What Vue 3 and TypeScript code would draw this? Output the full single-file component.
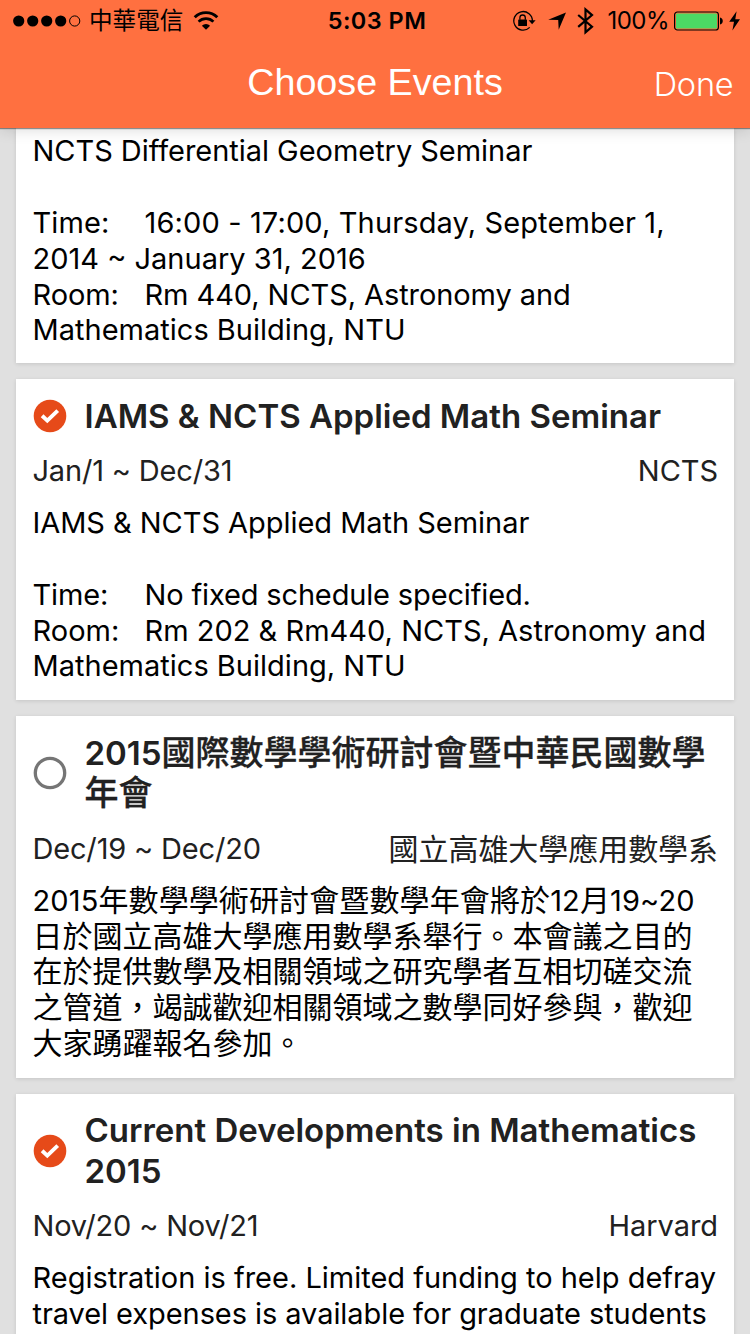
<script setup lang="ts">
interface BodyLine {
  text: string
  tracking: number
}

interface EventItem {
  id: number
  title: string[]
  selected: boolean
  dates: string
  host: string
  body: BodyLine[]
  partial?: boolean
}

const line = (text: string, tracking = 0): BodyLine => ({ text, tracking })

const events: EventItem[] = [
  {
    id: 1,
    title: [],
    selected: true,
    dates: '',
    host: '',
    partial: true,
    body: [
      line('NCTS Differential Geometry Seminar', -0.04),
      line(''),
      line('Time:\t16:00 - 17:00, Thursday, September 1,', 0.13),
      line('2014 ~ January 31, 2016'),
      line('Room:\tRm 440, NCTS, Astronomy and', -0.08),
      line('Mathematics Building, NTU', 0.01),
    ],
  },
  {
    id: 2,
    title: ['IAMS & NCTS Applied Math Seminar'],
    selected: true,
    dates: 'Jan/1 ~ Dec/31',
    host: 'NCTS',
    body: [
      line('IAMS & NCTS Applied Math Seminar', -0.04),
      line(''),
      line('Time:\tNo fixed schedule specified.', -0.15),
      line('Room:\tRm 202 & Rm440, NCTS, Astronomy and', 0.01),
      line('Mathematics Building, NTU', 0.01),
    ],
  },
  {
    id: 3,
    title: ['2015國際數學學術研討會暨中華民國數學', '年會'],
    selected: false,
    dates: 'Dec/19 ~ Dec/20',
    host: '國立高雄大學應用數學系',
    body: [
      line('2015年數學學術研討會暨數學年會將於12月19~20', 0.12),
      line('日於國立高雄大學應用數學系舉行。本會議之目的'),
      line('在於提供數學及相關領域之研究學者互相切磋交流'),
      line('之管道，竭誠歡迎相關領域之數學同好參與，歡迎'),
      line('大家踴躍報名參加。'),
    ],
  },
  {
    id: 4,
    title: ['Current Developments in Mathematics', '2015'],
    selected: true,
    dates: 'Nov/20 ~ Nov/21',
    host: 'Harvard',
    body: [
      line('Registration is free. Limited funding to help defray', -0.01),
      line('travel expenses is available for graduate students', -0.07),
    ],
  },
]

interface Run {
  text: string
  han: boolean
}

// Splits mixed text so Han characters can be set slightly larger than Latin ones.
function runs(text: string): Run[] {
  const parts = text.match(/[\u3000-\u9fff\uff00-\uffef]+|[^\u3000-\u9fff\uff00-\uffef]+/g) ?? []
  return parts.map((p) => ({ text: p, han: /[\u3000-\u9fff\uff00-\uffef]/.test(p) }))
}
</script>

<template>
  <div class="screen">
    <header class="header">
      <div class="status">
        <div class="status-left">
          <svg class="signal" width="68" height="12" viewBox="0 0 68 12">
            <circle v-for="n in 4" :key="n" :cx="5.7 + (n - 1) * 14" cy="6" r="5.6" />
            <circle cx="61.7" cy="6" r="5.1" fill="none" stroke="#000" stroke-width="1" />
          </svg>
          <span class="carrier">中華電信</span>
          <svg class="wifi" width="26" height="20" viewBox="0 0 26 20">
            <path d="M1.7 6.3A16 16 0 0 1 24.3 6.3" fill="none" stroke="#000" stroke-width="2.9" />
            <path d="M5.6 10.6A10.5 10.5 0 0 1 20.4 10.6" fill="none" stroke="#000" stroke-width="2.7" />
            <path d="M13 18.8L8.9 14.7A5.8 5.8 0 0 1 17.1 14.7Z" />
          </svg>
        </div>
        <span class="clock">5:03 PM</span>
        <div class="status-right">
          <svg class="lock" width="24" height="22" viewBox="0 0 24 22">
            <path d="M20.4 11.2A9.3 9.3 0 1 0 17.7 17.4" fill="none" stroke="#000" stroke-width="1.3" />
            <path d="M16.6 10.2H23.6L20.1 14.3Z" />
            <rect x="6.2" y="9.4" width="8.8" height="6.6" rx="0.6" />
            <path d="M7.9 9.8V7.7A2.7 2.7 0 0 1 13.3 7.7V9.8" fill="none" stroke="#000" stroke-width="1.3" />
          </svg>
          <svg class="location" width="18" height="18" viewBox="0 0 18 18">
            <path d="M18 0.4L10.7 17.8L10.2 8.1L0.2 7.8Z" />
          </svg>
          <svg class="bluetooth" width="17" height="28" viewBox="0 0 17 28">
            <path d="M1.2 8L15 19.7L8.5 25.4V2.4L15 8.1L1.2 19.8" fill="none" stroke="#000" stroke-width="2.2" />
          </svg>
          <span class="percent">100%</span>
          <svg class="battery" width="49" height="20" viewBox="0 0 49 20">
            <rect x="0.6" y="1" width="43.8" height="18" rx="2.8" fill="none" stroke="#000" stroke-width="1.2" />
            <rect x="2" y="2.4" width="41" height="15.2" rx="1.2" fill="#4cd964" />
            <path d="M46 6.5A3.6 3.6 0 0 1 46 13.5Z" />
          </svg>
          <svg class="bolt" width="12" height="20" viewBox="0 0 12 20">
            <path d="M7.6 0.2L0.2 10.8H5L3.4 19.6L11 8.2H6.3Z" />
          </svg>
        </div>
      </div>
      <div class="nav">
        <h1 class="nav-title">Choose Events</h1>
        <span class="done">Done</span>
      </div>
    </header>

    <main class="list">
      <article v-for="e in events" :key="e.id" class="card" :class="{ partial: e.partial }">
        <template v-if="!e.partial">
          <div class="heading">
            <svg class="check" width="34" height="34" viewBox="0 0 34 34">
              <template v-if="e.selected">
                <circle cx="17" cy="17" r="16.3" fill="#e64a19" />
                <path d="M9.1 16.8L14.3 21.6L24.7 11.7" fill="none" stroke="#fff" stroke-width="3.9" />
              </template>
              <circle v-else cx="17" cy="17" r="14.7" fill="none" stroke="#757575" stroke-width="3.3" />
            </svg>
            <h2 class="title">
              <span v-for="(t, i) in e.title" :key="i" class="line">
                <span v-for="(r, j) in runs(t)" :key="j" :class="{ han: r.han }">{{ r.text }}</span>
              </span>
            </h2>
          </div>
          <div class="meta">
            <span class="dates">{{ e.dates }}</span>
            <span class="host"><span v-for="(r, j) in runs(e.host)" :key="j" :class="{ han: r.han }">{{ r.text }}</span></span>
          </div>
        </template>
        <div class="body">
          <span
            v-for="(l, i) in e.body"
            :key="i"
            class="line"
            :style="{ letterSpacing: l.tracking + 'px' }"
          ><span v-for="(r, j) in runs(l.text)" :key="j" :class="{ han: r.han }">{{ r.text }}</span></span>
        </div>
      </article>
    </main>
  </div>
</template>

<style>
body {
  margin: 0;
}
</style>

<style scoped>
.screen {
  width: 750px;
  height: 1334px;
  overflow: hidden;
  display: flex;
  flex-direction: column;
  background: #e0e0e0;
  font-family: Inter, "Noto Sans CJK TC", sans-serif;
}
.header {
  flex: none;
  height: 128px;
  background: #ff7040;
  box-shadow: 0 1px 1px rgba(0, 0, 0, 0.4), 0 2px 14px rgba(0, 0, 0, 0.14);
  z-index: 1;
}
.status {
  height: 41px;
  display: grid;
  grid-template-columns: 1fr auto 1fr;
  align-items: center;
  padding: 0 9px 0 13px;
  font-size: 24px;
  color: #000;
}
.status-left,
.status-right {
  display: flex;
  align-items: center;
}
.status-right {
  justify-content: flex-end;
}
.carrier {
  margin-left: 8px;
  padding-top: 1px;
  font-size: 23.6px;
  line-height: 40px;
}
.wifi {
  margin-left: 10px;
}
.clock {
  font-weight: 600;
  font-size: 23.5px;
  letter-spacing: 0.45px;
}
.location {
  margin-left: 12px;
}
.bluetooth {
  margin-left: 11px;
}
.percent {
  margin-left: 13px;
  font-size: 24px;
  letter-spacing: -0.5px;
}
.battery {
  margin-left: 5px;
}
.bolt {
  margin-left: 6px;
}
.nav {
  height: 87px;
  display: grid;
  grid-template-columns: 1fr auto 1fr;
  align-items: center;
  padding: 0 16.5px;
  color: #fff;
}
.nav-title {
  grid-column: 2;
  margin: 0;
  padding-bottom: 4px;
  font-family: "Liberation Sans", Arial, sans-serif;
  font-size: 37.7px;
  font-weight: 400;
  line-height: 83px;
}
.done {
  justify-self: end;
  font-size: 32.5px;
  font-weight: 350;
  letter-spacing: -0.2px;
}
.list {
  display: flex;
  flex-direction: column;
  gap: 16px;
  padding: 0 16px;
}
.card {
  flex: none;
  padding: 16.7px 16px 15.8px 16.5px;
  background: #fff;
  box-shadow: 0 1px 4px rgba(0, 0, 0, 0.12);
}
.card.partial {
  padding-top: 5.35px;
  padding-bottom: 14.85px;
}
.card.partial .body {
  margin-top: 0;
}
.heading {
  display: flex;
  align-items: center;
  gap: 17.5px;
  padding-left: 0.5px;
}
.check {
  flex: none;
}
.title {
  margin: 0;
  font-size: 33px;
  font-weight: 600;
  line-height: 40.5px;
  color: #212121;
}
.title .line {
  height: 40.5px;
}
.title .han {
  font-size: 34px;
  font-weight: 500;
  -webkit-text-stroke: 0.3px #212121;
}
.line {
  display: block;
  white-space: pre;
}
.meta {
  display: flex;
  justify-content: space-between;
  height: 36px;
  margin-top: 17px;
  line-height: 36px;
  font-size: 29px;
  color: #212121;
}
.meta .han,
.body .han {
  font-size: 30px;
}
.dates {
  letter-spacing: -0.18px;
}
.host {
  letter-spacing: -0.05px;
}
.body {
  margin-top: 16.1px;
  font-size: 29px;
  line-height: 35.8px;
  color: #000;
  tab-size: 112px;
}
.body .line {
  height: 35.8px;
}
</style>
